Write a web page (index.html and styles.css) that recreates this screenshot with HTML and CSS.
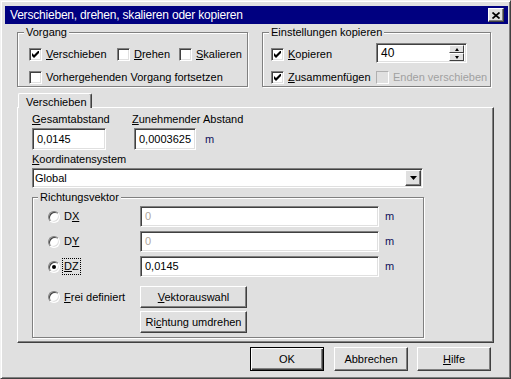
FILE: index.html
```html
<!DOCTYPE html>
<html>
<head>
<meta charset="utf-8">
<link rel="stylesheet" href="styles.css">
</head>
<body>
<div class="window">
  <div class="titlebar">
    <span class="title">Verschieben, drehen, skalieren oder kopieren</span>
    <span class="btn-close"><svg width="8" height="7" viewBox="0 0 8 7"><path d="M0.5 0.5L7.5 6.5M7.5 0.5L0.5 6.5" stroke="#000" stroke-width="1.7" fill="none"/></svg></span>
  </div>
  <div class="client">
    <div class="top-row">
      <div class="group g-vorgang">
        <span class="legend">Vorgang</span>
        <div class="row">
          <label class="check c1"><span class="box"><svg width="7" height="7" viewBox="0 0 7 7"><path d="M0 2L2 4L7 -1V2L2 7L0 5Z" fill="#000"/></svg></span><span><u>V</u>erschieben</span></label>
          <label class="check c2"><span class="box"></span><span><u>D</u>rehen</span></label>
          <label class="check"><span class="box"></span><span><u>S</u>kalieren</span></label>
        </div>
        <div class="row">
          <label class="check"><span class="box"></span><span>Vorhergehenden Vorgang fortsetzen</span></label>
        </div>
      </div>
      <div class="group g-kopie">
        <span class="legend">Einstellungen kopieren</span>
        <div class="row">
          <label class="check k1"><span class="box"><svg width="7" height="7" viewBox="0 0 7 7"><path d="M0 2L2 4L7 -1V2L2 7L0 5Z" fill="#000"/></svg></span><span><u>K</u>opieren</span></label>
          <div class="spin">
            <span class="spin-text">40</span>
            <span class="spin-btns">
              <span class="spin-btn"><span class="tri-up"></span></span>
              <span class="spin-btn"><span class="tri-down"></span></span>
            </span>
          </div>
        </div>
        <div class="row">
          <label class="check k1"><span class="box"><svg width="7" height="7" viewBox="0 0 7 7"><path d="M0 2L2 4L7 -1V2L2 7L0 5Z" fill="#000"/></svg></span><span><u>Z</u>usammenfügen</span></label>
          <label class="check disabled"><span class="box"></span><span>Enden verschieben</span></label>
        </div>
      </div>
    </div>

    <div class="tabs"><div class="tab">Verschieben</div></div>
    <div class="panel">
      <div class="fields">
        <div class="field1">
          <div class="lbl"><u>G</u>esamtabstand</div>
          <div class="input in-gesamt">0,0145</div>
        </div>
        <div class="field2">
          <div class="lbl"><u>Z</u>unehmender Abstand</div>
          <div class="unit-row">
            <div class="input in-zun">0,0003625</div>
            <span class="unit">m</span>
          </div>
        </div>
      </div>
      <div class="lbl lbl-koord"><u>K</u>oordinatensystem</div>
      <div class="select">
        <span class="select-text">Global</span>
        <span class="drop-btn"><svg width="7" height="4" viewBox="0 0 7 4"><path d="M0 0H7L3.5 4Z" fill="#000"/></svg></span>
      </div>

      <div class="group g-vec">
        <span class="legend">Richtungsvektor</span>
        <div class="vec-grid">
          <label class="rad"><span class="radio"></span><span>D<u>X</u></span></label>
          <div class="input vin dis">0</div>
          <span class="unit vunit">m</span>

          <label class="rad"><span class="radio"></span><span>D<u>Y</u></span></label>
          <div class="input vin dis">0</div>
          <span class="unit vunit">m</span>

          <label class="rad"><span class="radio on"></span><span class="focus"><u>D</u>Z</span></label>
          <div class="input vin">0,0145</div>
          <span class="unit vunit">m</span>
        </div>
        <div class="frei">
          <label class="rad"><span class="radio"></span><span><u>F</u>rei definiert</span></label>
          <div class="btn"><span><u>V</u>ektorauswahl</span></div>
          <div></div>
          <div class="btn"><span>Ri<u>c</u>htung umdrehen</span></div>
        </div>
      </div>
    </div>

    <div class="bottom">
      <div class="btn btn-big btn-ok">OK</div>
      <div class="btn btn-big">Abbrechen</div>
      <div class="btn btn-big"><span><u>H</u>ilfe</span></div>
    </div>
  </div>
</div>
</body>
</html>
```

FILE: styles.css
```css
* { box-sizing: border-box; }
html, body { margin: 0; padding: 0; }
body {
  font-family: "Liberation Sans", Arial, sans-serif;
  font-size: 11px;
  line-height: 13px;
  color: #000;
  background: #e0e0e0;
}
u { text-decoration: underline; text-underline-offset: 1px; }

.window {
  width: 511px;
  height: 379px;
  background: #e0e0e0;
  border: 1px solid;
  border-color: #f2f2f2 #404040 #404040 #f2f2f2;
  box-shadow: inset 1px 1px #fff, inset -1px -1px #808080;
  padding: 5px 2px 0 4px;
  display: flex;
  flex-direction: column;
}

.titlebar {
  height: 18px;
  flex: none;
  background: #000080;
  color: #fff;
  display: flex;
  align-items: center;
  justify-content: space-between;
  padding-left: 5px;
  font-size: 12px;
  letter-spacing: -0.2px;
}
.btn-close {
  width: 16px;
  height: 14px;
  margin-right: 4px;
  background: #e0e0e0;
  border: 1px solid;
  border-color: #fff #404040 #404040 #fff;
  box-shadow: inset -1px -1px #808080;
  display: flex;
  align-items: center;
  justify-content: center;
}

.client {
  flex: 1;
  padding: 8px 14px 0 12px;
}

.top-row { display: flex; gap: 14px; }

.group {
  position: relative;
  border: 1px solid #808080;
  box-shadow: inset 1px 1px #fff, 1px 1px #fff;
}
.legend {
  position: absolute;
  top: -7px;
  left: 6px;
  padding: 0 2px;
  background: #e0e0e0;
  line-height: 13px;
  white-space: nowrap;
}
.g-vorgang { width: 231px; height: 55px; padding: 15px 0 0 11px; }
.g-kopie { width: 229px; height: 55px; padding: 15px 0 0 8px; }

.row { display: flex; height: 13px; align-items: flex-start; }
.row + .row { margin-top: 10px; }

.check { display: flex; align-items: center; gap: 4px; white-space: nowrap; height: 13px; }
.c1 { width: 88px; }
.c2 { width: 62px; }
.k1 { width: 105px; }

.box {
  width: 13px;
  height: 13px;
  flex: none;
  background: #fff;
  border: 1px solid;
  border-color: #808080 #fff #fff #808080;
  box-shadow: inset 1px 1px #404040, inset -1px -1px #e0e0e0;
  display: flex;
  align-items: center;
  justify-content: center;
}
.box svg { display: block; }
.disabled { color: #a0a0a0; }
.disabled .box {
  background: #e0e0e0;
  border-color: #b0b0b0 #fff #fff #b0b0b0;
  box-shadow: none;
}

.spin {
  width: 91px;
  height: 20px;
  margin-top: -5px;
  background: #fff;
  border: 1px solid;
  border-color: #808080 #fff #fff #808080;
  box-shadow: inset 1px 1px #404040, inset -1px -1px #e0e0e0;
  display: flex;
  align-items: center;
  justify-content: space-between;
  padding: 2px 2px 2px 4px;
}
.spin-text { font-size: 12px; }
.spin-btns { display: flex; flex-direction: column; width: 15px; height: 16px; }
.spin-btn {
  flex: 1;
  background: #e0e0e0;
  border: 1px solid;
  border-color: #fff #404040 #404040 #fff;
  display: flex;
  align-items: center;
  justify-content: center;
}
.tri-up { width: 0; height: 0; border-left: 2.5px solid transparent; border-right: 2.5px solid transparent; border-bottom: 3px solid #000; }
.tri-down { width: 0; height: 0; border-left: 2.5px solid transparent; border-right: 2.5px solid transparent; border-top: 3px solid #000; }

.tabs { display: flex; margin-top: 6px; padding-left: 1px; }
.tab {
  position: relative;
  z-index: 1;
  width: 74px;
  height: 15px;
  margin-bottom: -1px;
  padding: 2px 0 0 7px;
  background: #e0e0e0;
  border-left: 1px solid #fff;
  border-top: 1px solid #fff;
  border-right: 1px solid #404040;
  box-shadow: inset -1px 0 #808080;
  border-radius: 2px 2px 0 0;
}

.panel {
  height: 236px;
  border-left: 1px solid #fff;
  border-top: 1px solid #fff;
  border-right: 1px solid #404040;
  border-bottom: 1px solid #404040;
  box-shadow: inset -1px -1px #808080;
  padding: 5px 0 0 14px;
}

.fields { display: flex; }
.field1 { width: 100px; }
.lbl { height: 13px; white-space: nowrap; }
.input {
  height: 22px;
  background: #fff;
  border: 1px solid;
  border-color: #808080 #fff #fff #808080;
  box-shadow: inset 1px 1px #404040, inset -1px -1px #e0e0e0;
  padding: 0 4px;
  display: flex;
  align-items: center;
  white-space: nowrap;
}
.in-gesamt { width: 74px; margin-top: 2px; }
.unit-row { display: flex; align-items: center; gap: 9px; margin-top: 2px; }
.in-zun { width: 62px; margin-left: 2px; }
.unit { color: #10105a; }

.lbl-koord { margin-top: 3px; }
.select {
  width: 391px;
  height: 20px;
  margin-top: 2px;
  background: #fff;
  border: 1px solid;
  border-color: #808080 #fff #fff #808080;
  box-shadow: inset 1px 1px #404040, inset -1px -1px #e0e0e0;
  padding: 1px 1px 1px 2px;
  display: flex;
  align-items: center;
  justify-content: space-between;
}
.drop-btn {
  width: 16px;
  height: 16px;
  background: #e0e0e0;
  border: 1px solid;
  border-color: #fff #404040 #404040 #fff;
  box-shadow: inset -1px -1px #808080;
  display: flex;
  align-items: center;
  justify-content: center;
}
.drop-btn svg { display: block; }

.g-vec {
  width: 392px;
  height: 141px;
  margin-top: 9px;
  padding: 8px 0 0 15px;
}
.g-vec .legend { left: 5px; }

.vec-grid {
  display: grid;
  grid-template-columns: 92px 239px auto;
  grid-auto-rows: 21px;
  row-gap: 4px;
  align-items: center;
}
.vin { height: 21px; }
.vin.dis { color: #b0a79c; }
.vunit { margin-left: 6px; }

.rad { display: flex; align-items: center; gap: 4px; white-space: nowrap; }
.radio {
  width: 12px;
  height: 12px;
  flex: none;
  border-radius: 50%;
  background: #fff;
  border: 1px solid;
  border-color: #808080 #fff #fff #808080;
  box-shadow: inset 1px 1px #404040, inset -1px -1px #e0e0e0;
  display: flex;
  align-items: center;
  justify-content: center;
}
.radio.on::after {
  content: "";
  width: 4px;
  height: 4px;
  border-radius: 50%;
  background: #000;
}
.focus { outline: 1px dotted #000; outline-offset: 1px; }

.frei {
  display: grid;
  grid-template-columns: 92px 107px;
  grid-auto-rows: 22px;
  row-gap: 3px;
  margin-top: 9px;
  align-items: center;
}

.btn {
  height: 22px;
  background: #e0e0e0;
  border: 1px solid;
  border-color: #fff #404040 #404040 #fff;
  box-shadow: inset -1px -1px #808080;
  display: flex;
  align-items: center;
  justify-content: center;
  white-space: nowrap;
}

.bottom {
  display: flex;
  justify-content: flex-end;
  gap: 9px;
  margin-top: 4px;
  padding-right: 3px;
}
.btn-big { width: 74px; height: 24px; }
.btn-ok {
  margin-right: 1px;
  border: 1px solid #000;
  box-shadow: inset 1px 1px #fff, inset -1px -1px #404040, inset -2px -2px #808080;
}
```
